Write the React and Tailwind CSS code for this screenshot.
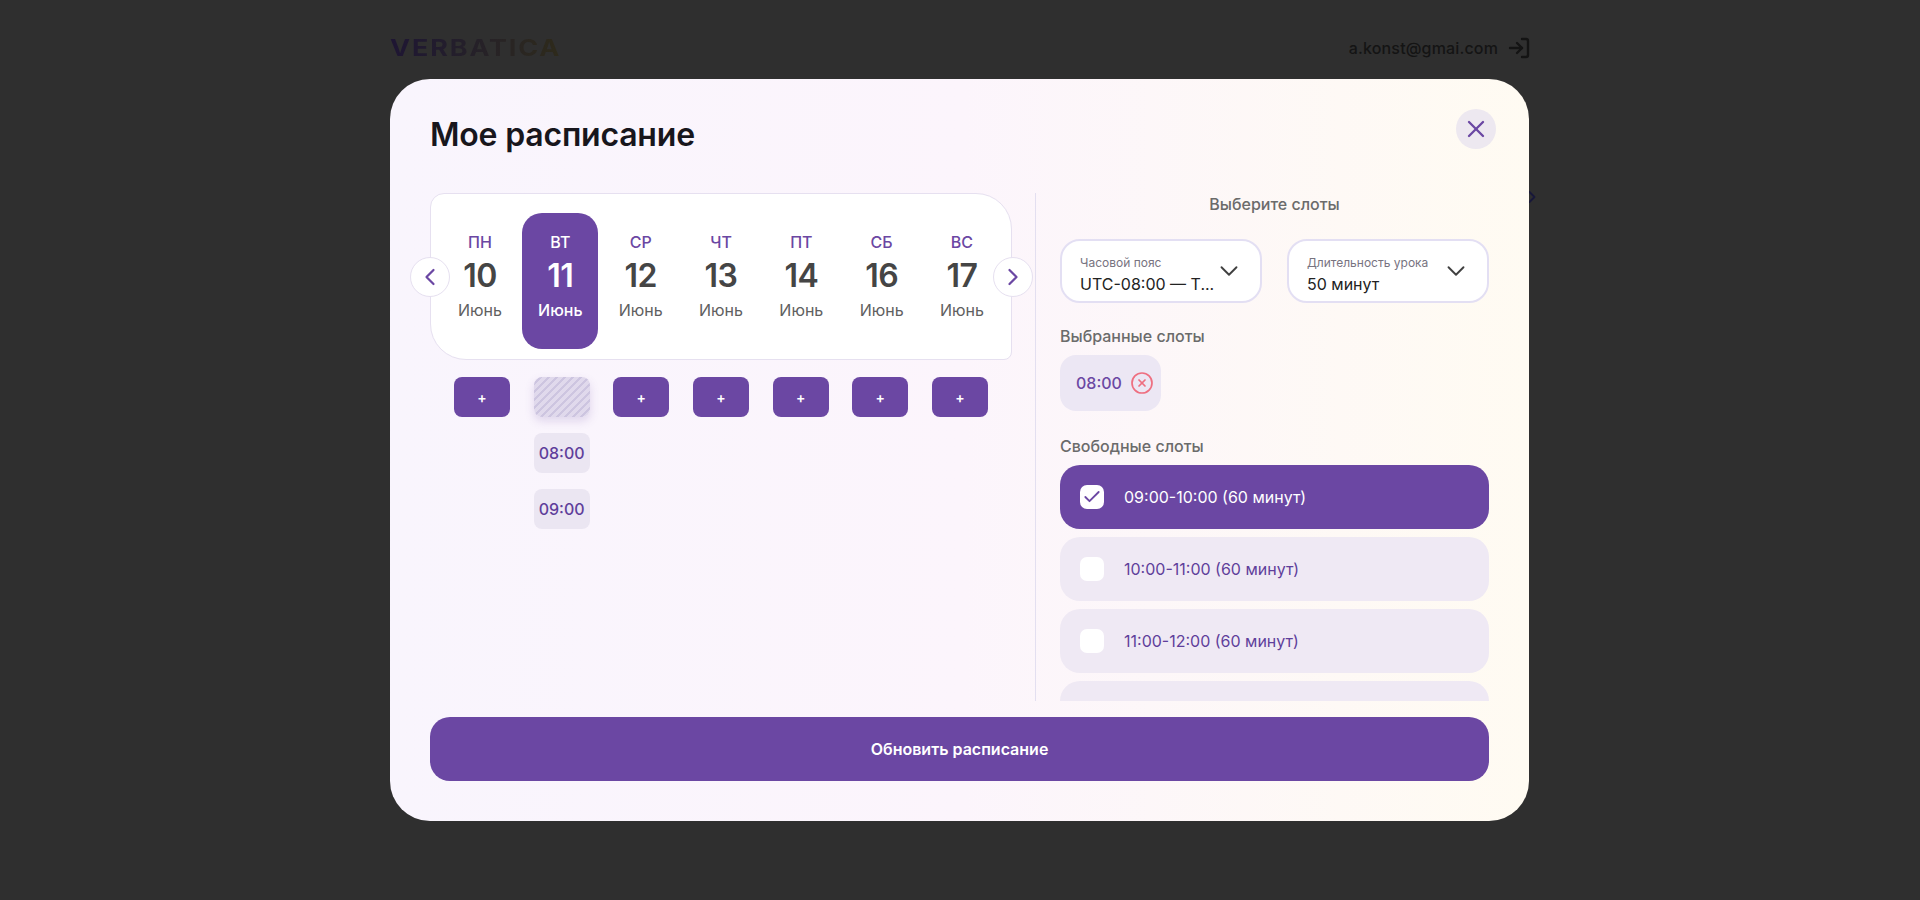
import React from "react";
import { ChevronDown, ChevronLeft, ChevronRight, Check, CircleX, LogIn, X } from "lucide-react";

const days = [
  { name: "ПН", num: 10 },
  { name: "ВТ", num: 11, active: true },
  { name: "СР", num: 12 },
  { name: "ЧТ", num: 13 },
  { name: "ПТ", num: 14 },
  { name: "СБ", num: 16 },
  { name: "ВС", num: 17 },
];

function DayColumn({ day }) {
  return (
    <div
      className={`w-[76px] h-[136px] rounded-[20px] pt-[19px] flex flex-col items-center ${
        day.active ? "bg-[#6b47a3]" : ""
      }`}
    >
      <div className={`text-[16px] leading-[20px] font-medium ${day.active ? "text-white" : "text-[#6b47a3]"}`}>
        {day.name}
      </div>
      <div
        className={`mt-[4px] text-[32px] leading-[40px] font-semibold tracking-[-0.5px] ${
          day.active ? "text-white" : "text-[#454545]"
        }`}
      >
        {day.num}
      </div>
      <div className={`mt-[2px] text-[16px] leading-[24px] ${day.active ? "text-white font-medium" : "text-[#606060]"}`}>
        Июнь
      </div>
    </div>
  );
}

function SelectBox({ label, value }) {
  return (
    <div className="h-[64px] rounded-[20px] border-2 border-[#e3dff3] bg-white pl-[18px] pr-[16px] flex items-center justify-between">
      <div className="min-w-0 pt-[7px]">
        <div className="text-[12px] leading-[16px] text-[#77737f]">{label}</div>
        <div className="mt-[2px] text-[16px] leading-[22px] text-[#222222] whitespace-nowrap">{value}</div>
      </div>
      <ChevronDown size={30} strokeWidth={1.5} className="shrink-0 text-[#404040]" />
    </div>
  );
}

function SlotRow({ text, checked }) {
  return (
    <div
      className={`h-[64px] shrink-0 rounded-[20px] pl-[20px] flex items-center gap-[20px] ${
        checked ? "bg-[#6b47a3] text-white" : "bg-[#efe9f4] text-[#5f3f9b]"
      }`}
    >
      <div className="w-[24px] h-[24px] rounded-[7px] bg-white flex items-center justify-center">
        {checked && <Check size={20} strokeWidth={2.2} className="text-[#6b47a3]" />}
      </div>
      <div className="text-[16px] leading-[24px]">{text}</div>
    </div>
  );
}

export default function App() {
  return (
    <div className="relative h-[900px] overflow-hidden bg-[#2f2f2f] font-['Inter',sans-serif]">
      <header className="w-[1140px] mx-auto h-[96px] flex items-center justify-between">
        <div className="origin-left scale-x-[1.17] text-[23px] font-bold tracking-[1.6px] bg-gradient-to-r from-[#1e1533] to-[#2e2a1a] bg-clip-text text-transparent">
          VERBATICA
        </div>
        <div className="flex items-center gap-[9px] -mr-[1px] text-[#141414]">
          <span className="text-[16px] font-medium tracking-[0.15px]">a.konst@gmai.com</span>
          <LogIn size={24} strokeWidth={2.4} />
        </div>
      </header>
      <ChevronRight size={20} strokeWidth={2.2} className="absolute left-[1522px] top-[187px] text-[#18183a]" />

      <div className="absolute inset-0 pr-[1px] flex items-center justify-center">
        <div className="relative w-[1139px] h-[742px] rounded-[40px] p-[40px] bg-gradient-to-r from-[#f9f5fd] via-[#fcf5fc] to-[#fffbf2]">
          <button className="absolute top-[30px] right-[33px] w-[40px] h-[40px] rounded-full bg-[#ede8f0] flex items-center justify-center text-[#6b47a3]">
            <X size={28} strokeWidth={2} />
          </button>

          <h1 className="text-[32px] leading-[32px] font-semibold text-[#18161c] tracking-[-0.2px]">Мое расписание</h1>

          <div className="mt-[42px] flex h-[508px]">
            <div className="w-[582px] shrink-0">
              <div className="relative h-[167px] bg-white border border-[#e6e0f0] rounded-tl-[14px] rounded-tr-[36px] rounded-bl-[36px] rounded-br-[8px] px-[11px] pt-[19px] flex justify-between">
                {days.map((d) => (
                  <DayColumn key={d.num} day={d} />
                ))}
                <button className="absolute top-[63px] -left-[21px] w-[40px] h-[40px] rounded-full bg-white border border-[#e6e0f0] flex items-center justify-center text-[#6b47a3]">
                  <ChevronLeft size={28} strokeWidth={1.9} />
                </button>
                <button className="absolute top-[63px] -right-[22px] w-[40px] h-[40px] rounded-full bg-white border border-[#e6e0f0] flex items-center justify-center text-[#6b47a3]">
                  <ChevronRight size={28} strokeWidth={1.9} />
                </button>
              </div>

              <div className="mt-[17px] px-[24px] flex justify-between">
                {days.map((d) =>
                  d.active ? (
                    <div key={d.num} className="w-[56px] flex flex-col gap-[16px]">
                      <div className="h-[40px] rounded-[8px] shadow-[0_4px_10px_rgba(107,71,163,0.18)] bg-[repeating-linear-gradient(135deg,#e0d9ec_0px,#e0d9ec_3.6px,#cdc5e0_3.6px,#cdc5e0_5.66px)]" />
                      <div className="h-[40px] rounded-[8px] bg-[#ebe6f2] flex items-center justify-center text-[16px] font-medium text-[#5f3f9b]">
                        08:00
                      </div>
                      <div className="h-[40px] rounded-[8px] bg-[#ebe6f2] flex items-center justify-center text-[16px] font-medium text-[#5f3f9b]">
                        09:00
                      </div>
                    </div>
                  ) : (
                    <button
                      key={d.num}
                      className="w-[56px] h-[40px] rounded-[8px] bg-[#6b47a3] text-white text-[14px] font-semibold"
                    >
                      +
                    </button>
                  )
                )}
              </div>
            </div>

            <div className="ml-[23px] pl-[24px] flex-1 min-w-0 border-l border-[#e3dff0] flex flex-col">
              <div className="-mt-[1px] text-center text-[16px] leading-[24px] font-medium text-[#6b6b6b]">Выберите слоты</div>
              <div className="mt-[23px] grid grid-cols-2 gap-[25px]">
                <SelectBox label="Часовой пояс" value="UTC-08:00 — T..." />
                <SelectBox label="Длительность урока" value="50 минут" />
              </div>

              <div className="mt-[21px] text-[16px] leading-[24px] font-medium text-[#6b6b6b]">Выбранные слоты</div>
              <div className="mt-[7px] w-[101px] h-[56px] rounded-[16px] bg-[#ece7f4] pl-[16px] flex items-center gap-[8px]">
                <span className="text-[16px] font-medium text-[#6b47a3]">08:00</span>
                <CircleX size={24} strokeWidth={1.7} className="text-[#ee6f80]" />
              </div>

              <div className="mt-[23px] text-[16px] leading-[24px] font-medium text-[#6b6b6b]">Свободные слоты</div>
              <div className="mt-[7px] flex-1 min-h-0 overflow-hidden flex flex-col gap-[8px]">
                <SlotRow text="09:00-10:00 (60 минут)" checked />
                <SlotRow text="10:00-11:00 (60 минут)" />
                <SlotRow text="11:00-12:00 (60 минут)" />
                <div className="h-[64px] shrink-0 rounded-[20px] bg-[#efe9f4]" />
              </div>
            </div>
          </div>

          <button className="mt-[16px] w-full h-[64px] rounded-[20px] bg-[#6b47a3] text-white text-[16px] font-semibold">
            Обновить расписание
          </button>
        </div>
      </div>
    </div>
  );
}
